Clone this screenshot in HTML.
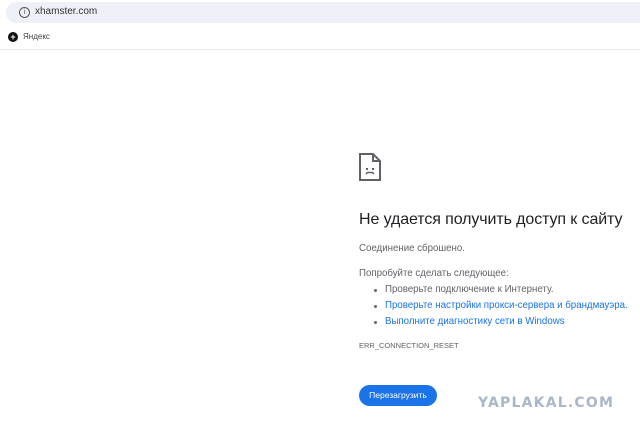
<!DOCTYPE html>
<html><head><meta charset="utf-8"><style>
body{margin:0;width:640px;height:434px;background:#fff;font-family:"Liberation Sans","Noto Sans CJK SC",sans-serif;position:relative;overflow:hidden;color:#202124}
.addr{position:absolute;left:6px;top:2px;width:660px;height:21px;background:#edf0f7;border-radius:11px}
.addr span{position:absolute;left:29px;top:4px;font-size:10px;color:#333}
.ii{position:absolute;left:13px;top:5px;width:9px;height:9px;border:1px solid #555;border-radius:50%;font-size:7px;line-height:9px;text-align:center;color:#555}
.bm{position:absolute;left:8px;top:32px;width:10px;height:10px;background:#111;border-radius:50%;color:#fff;font-size:9px;line-height:10px;text-align:center;font-weight:bold}
.bmt{position:absolute;left:23px;top:32px;font-size:8px;color:#444}
.line{position:absolute;left:0;top:49px;width:640px;height:1px;background:#e8e8e8}
.t{position:absolute;left:359px;white-space:nowrap}
h1{position:absolute;left:359px;top:211px;margin:0;font-size:16px;font-weight:normal;color:#202124;letter-spacing:-0.1px}
.s{font-size:9.7px;color:#5f6368}
.l{color:#1a73e8}
.dot{position:absolute;left:374px;width:3px;height:3px;background:#666;border-radius:50%}
.btn{position:absolute;left:359px;top:385px;width:78px;height:21px;background:#1a73e8;border-radius:11px;color:#fff;font-size:8.5px;line-height:21px;text-align:center}
.wm{position:absolute;left:478px;top:395px;font-family:"DejaVu Sans",sans-serif;font-weight:bold;font-size:14px;color:#a9b8c8;letter-spacing:1.2px}
</style></head><body>
<div class="addr"><div class="ii">i</div><span>xhamster.com</span></div>
<div class="bm">+</div><div class="bmt">Яндекс</div>
<div class="line"></div>
<svg style="position:absolute;left:359px;top:153px" width="22" height="28" viewBox="0 0 22 28"><path d="M1 1H14L21 8V27H1Z M14 1V8H21" fill="none" stroke="#5f6368" stroke-width="2"/><path d="M7 21L8.5 19.5H13.5L15 21" fill="none" stroke="#5f6368" stroke-width="1.5"/><rect x="7" y="15" width="2" height="2" fill="#5f6368"/><rect x="13" y="15" width="2" height="2" fill="#5f6368"/></svg>
<h1>Не удается получить доступ к сайту</h1>
<div class="t s" style="top:243px">Соединение сброшено.</div>
<div class="t s" style="top:268px">Попробуйте сделать следующее:</div>
<div class="dot" style="top:289px"></div><div class="t s" style="left:385px;top:284px">Проверьте подключение к Интернету.</div>
<div class="dot" style="top:305px"></div><div class="t s l" style="left:385px;top:300px">Проверьте настройки прокси-сервера и брандмауэра.</div>
<div class="dot" style="top:321px"></div><div class="t s l" style="left:385px;top:316px">Выполните диагностику сети в Windows</div>
<div class="t" style="top:341px;font-size:7.5px;color:#5f6368">ERR_CONNECTION_RESET</div>
<div class="btn">Перезагрузить</div>
<div class="wm">YAPLAKAL.COM</div>
</body></html>
